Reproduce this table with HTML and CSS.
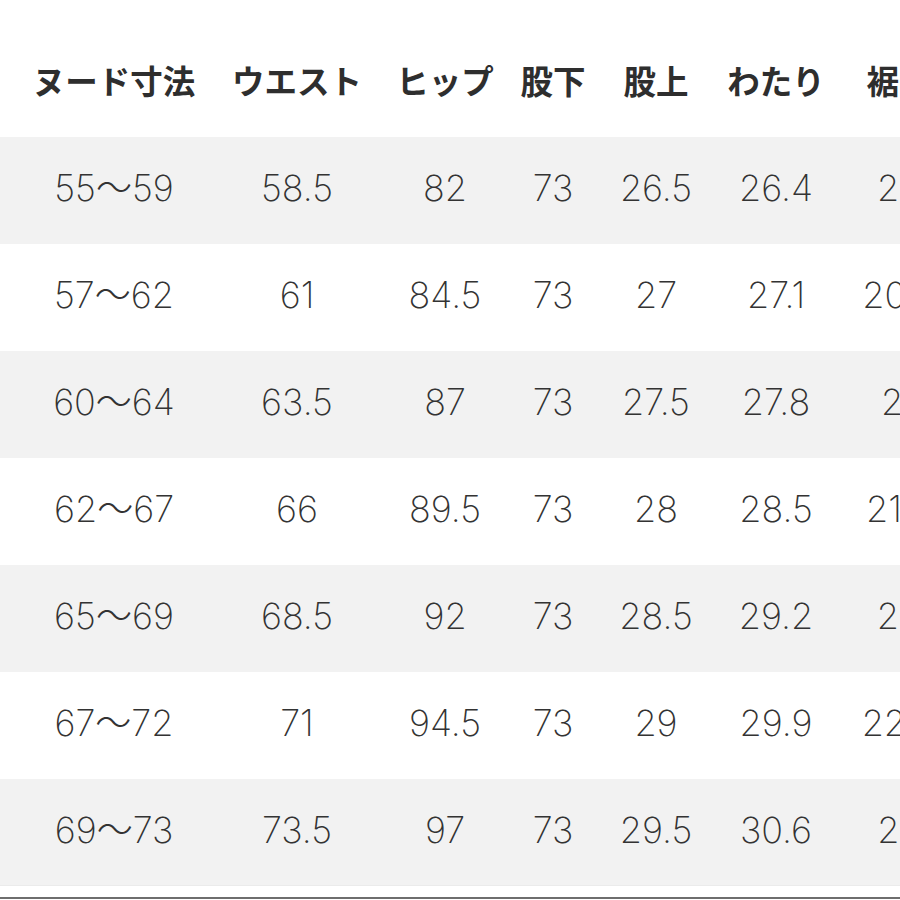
FILE: index.html
```html
<!DOCTYPE html>
<html lang="ja">
<head>
<meta charset="utf-8">
<title>サイズ表</title>
<link rel="stylesheet" href="styles.css">
</head>
<body>
<div class="table">
  <div class="row head">
    <div class="c c0"></div>
    <div class="c c1">ヌード寸法</div>
    <div class="c c2">ウエスト</div>
    <div class="c c3">ヒップ</div>
    <div class="c c4">股下</div>
    <div class="c c5">股上</div>
    <div class="c c6">わたり</div>
    <div class="c c7">裾幅</div>
  </div>
  <div class="row alt">
    <div class="c c0"></div>
    <div class="c c1">55〜59</div>
    <div class="c c2">58.5</div>
    <div class="c c3">82</div>
    <div class="c c4">73</div>
    <div class="c c5">26.5</div>
    <div class="c c6">26.4</div>
    <div class="c c7">20</div>
  </div>
  <div class="row">
    <div class="c c0"></div>
    <div class="c c1">57〜62</div>
    <div class="c c2">61</div>
    <div class="c c3">84.5</div>
    <div class="c c4">73</div>
    <div class="c c5">27</div>
    <div class="c c6">27.1</div>
    <div class="c c7">20.5</div>
  </div>
  <div class="row alt">
    <div class="c c0"></div>
    <div class="c c1">60〜64</div>
    <div class="c c2">63.5</div>
    <div class="c c3">87</div>
    <div class="c c4">73</div>
    <div class="c c5">27.5</div>
    <div class="c c6">27.8</div>
    <div class="c c7">21</div>
  </div>
  <div class="row">
    <div class="c c0"></div>
    <div class="c c1">62〜67</div>
    <div class="c c2">66</div>
    <div class="c c3">89.5</div>
    <div class="c c4">73</div>
    <div class="c c5">28</div>
    <div class="c c6">28.5</div>
    <div class="c c7">21.5</div>
  </div>
  <div class="row alt">
    <div class="c c0"></div>
    <div class="c c1">65〜69</div>
    <div class="c c2">68.5</div>
    <div class="c c3">92</div>
    <div class="c c4">73</div>
    <div class="c c5">28.5</div>
    <div class="c c6">29.2</div>
    <div class="c c7">22</div>
  </div>
  <div class="row">
    <div class="c c0"></div>
    <div class="c c1">67〜72</div>
    <div class="c c2">71</div>
    <div class="c c3">94.5</div>
    <div class="c c4">73</div>
    <div class="c c5">29</div>
    <div class="c c6">29.9</div>
    <div class="c c7">22.5</div>
  </div>
  <div class="row alt last">
    <div class="c c0"></div>
    <div class="c c1">69〜73</div>
    <div class="c c2">73.5</div>
    <div class="c c3">97</div>
    <div class="c c4">73</div>
    <div class="c c5">29.5</div>
    <div class="c c6">30.6</div>
    <div class="c c7">23</div>
  </div>
</div>
<div class="foot"></div>
</body>
</html>
```

FILE: styles.css
```css
html, body {
  margin: 0;
  padding: 0;
  background: #ffffff;
  width: 900px;
  height: 900px;
  overflow: hidden;
}

.table {
  width: 962px;
  display: flex;
  flex-direction: column;
  color: #333333;
}

.row {
  display: flex;
  box-sizing: border-box;
  height: 107px;
  padding-bottom: 5px;
  align-items: center;
  font-family: "Inter", "Noto Sans CJK JP", sans-serif;
  font-weight: 200;
  font-size: 36px;
  line-height: 1;
}

.row.alt {
  background: #f2f2f2;
}

.row.last {
  border-bottom: 1px solid #ebebeb;
}

.row.head {
  height: 137px;
  padding-bottom: 0;
  align-items: flex-start;
  font-family: "Noto Sans CJK JP", sans-serif;
  font-weight: 700;
  font-size: 32.5px;
  line-height: 36px;
  color: #2e2e2e;
}

.row.head .c {
  padding-top: 62px;
}

.c {
  flex: none;
  text-align: center;
  white-space: nowrap;
}

.c0 { width: 14px; }
.c1 { width: 200px; }
.c2 { width: 166px; }
.c3 { width: 130px; }
.c4 { width: 86px; }
.c5 { width: 120px; }
.c6 { width: 120px; }
.c7 { width: 126px; }

.foot {
  height: 11px;
  border-bottom: 2px solid #6e6e6e;
}
```
